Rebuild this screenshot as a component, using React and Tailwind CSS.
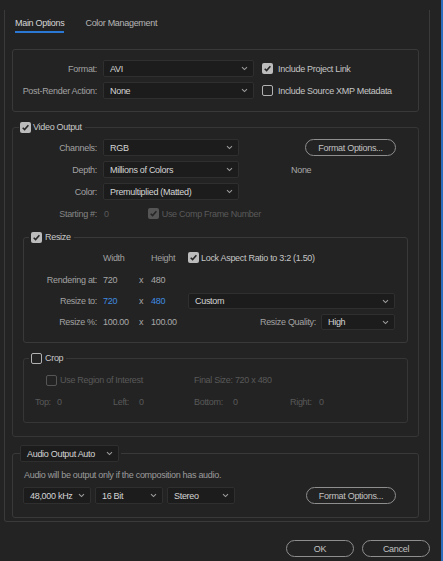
import React from "react";

// Small down-chevron used by every dropdown
function Chevron() {
  return (
    <svg width="7" height="5" viewBox="0 0 7 5" className="shrink-0">
      <path d="M1 1.2l2.5 2.4L6 1.2" fill="none" stroke="#9c9c9c" strokeWidth="1.1" />
    </svg>
  );
}

function Select({ className = "", children }) {
  return (
    <div
      className={`flex items-center justify-between bg-[#1c1c1c] border border-[#2f2f2f] rounded-[2px] pl-[6px] pr-[5px] text-[#d4d4d4] ${className}`}
    >
      <span className="whitespace-nowrap">{children}</span>
      <Chevron />
    </div>
  );
}

function Check({ on = false, dim = false }) {
  if (on) {
    return (
      <span
        className={`w-[11px] h-[11px] rounded-[2px] flex items-center justify-center shrink-0 ${
          dim ? "bg-[#555555]" : "bg-[#bcbcbc]"
        }`}
      >
        <svg width="9" height="9" viewBox="0 0 9 9">
          <path d="M1.7 4.7l1.9 1.9L7.4 2.3" fill="none" stroke="#262626" strokeWidth="1.6" />
        </svg>
      </span>
    );
  }
  return (
    <span
      className={`block w-[11px] h-[11px] rounded-[2px] border-[1.5px] shrink-0 ${
        dim ? "border-[#555555]" : "border-[#b2b2b2]"
      }`}
    />
  );
}

function Pill({ className = "", children }) {
  return (
    <div
      className={`flex items-center justify-center rounded-full border border-[#8e8e8e] text-[#c2c2c2] whitespace-nowrap ${className}`}
    >
      {children}
    </div>
  );
}

function Label({ className = "w-[84px]", children }) {
  return <span className={`text-right text-[#a2a2a2] whitespace-nowrap shrink-0 ${className}`}>{children}</span>;
}

export default function App() {
  return (
    <div className="w-[443px] h-[561px] bg-[#232323] border-r-2 border-[#2a6dbb] flex flex-col text-[9px] leading-[12px] tracking-[-0.3px] font-['Liberation_Sans',Arial,sans-serif] overflow-hidden">
      {/* main panel */}
      <div className="ml-[4px] mt-[10px] w-[426px] h-[512px] shrink-0 border-x border-b border-[#3a3a3a] rounded-b-[3px] flex flex-col">
        {/* tabs */}
        <div className="flex items-end ml-[10px] mt-[7px] gap-[21px]">
          <div className="pb-[2px] border-b-2 border-[#2b78d4] text-[#d6d6d6]">Main Options</div>
          <div className="pb-[4px] text-[#b6b6b6]">Color Management</div>
        </div>

        {/* format group */}
        <div className="ml-[7px] mt-[16px] w-[407px] h-[63px] shrink-0 border border-[#393939] rounded-[3px] pt-[10px] flex flex-col gap-[5px]">
          <div className="flex items-center h-[17px]">
            <Label>Format:</Label>
            <Select className="ml-[6px] w-[151px] h-[17px]">AVI</Select>
            <span className="ml-[8px]">
              <Check on />
            </span>
            <span className="ml-[5px] text-[#c6c6c6]">Include Project Link</span>
          </div>
          <div className="flex items-center h-[17px]">
            <Label>Post-Render Action:</Label>
            <Select className="ml-[6px] w-[151px] h-[17px]">None</Select>
            <span className="ml-[8px]">
              <Check />
            </span>
            <span className="ml-[5px] text-[#c6c6c6]">Include Source XMP Metadata</span>
          </div>
        </div>

        {/* video output */}
        <fieldset className="ml-[7px] mt-[9px] w-[407px] border border-[#363636] rounded-[3px] pb-[13px]">
          <legend className="ml-[6px] pl-[1px] pr-[3px]">
            <div className="flex items-center h-[12px] gap-[2px]">
              <Check on />
              <span className="text-[#c8c8c8]">Video Output</span>
            </div>
          </legend>

          <div className="mt-[6px] flex flex-col gap-[5px]">
            <div className="flex items-center h-[17px]">
              <Label>Channels:</Label>
              <Select className="ml-[6px] w-[136px] h-[17px]">RGB</Select>
              <Pill className="ml-[66px] w-[91px] h-[17px]">Format Options...</Pill>
            </div>
            <div className="flex items-center h-[17px]">
              <Label>Depth:</Label>
              <Select className="ml-[6px] w-[136px] h-[17px]">Millions of Colors</Select>
              <span className="ml-[52px] text-[#a8a8a8]">None</span>
            </div>
            <div className="flex items-center h-[17px]">
              <Label>Color:</Label>
              <Select className="ml-[6px] w-[136px] h-[17px]">Premultiplied (Matted)</Select>
            </div>
            <div className="flex items-center h-[17px] text-[#5a5a5a]">
              <span className="w-[84px] text-right text-[#858585]">Starting #:</span>
              <span className="ml-[7px]">0</span>
              <span className="ml-[39px]">
                <Check on dim />
              </span>
              <span className="ml-[3px]">Use Comp Frame Number</span>
            </div>
          </div>

          {/* resize */}
          <fieldset className="ml-[10px] mt-[9px] w-[385px] border border-[#393939] rounded-[3px] pb-[12px]">
            <legend className="ml-[5px] pl-[2px] pr-[3px]">
              <div className="flex items-center h-[12px] gap-[3px]">
                <Check on />
                <span className="text-[#c8c8c8]">Resize</span>
              </div>
            </legend>

            <div className="flex items-center h-[13px] mt-[8px]">
              <span className="w-[73px] shrink-0" />
              <span className="ml-[6px] w-[36px] text-[#a0a0a0]">Width</span>
              <span className="w-[12px]" />
              <span className="w-[37px] text-[#a0a0a0]">Height</span>
              <Check on />
              <span className="ml-[2px] text-[#c6c6c6]">Lock Aspect Ratio to 3:2 (1.50)</span>
            </div>

            <div className="flex items-center h-[13px] mt-[9px] text-[#a8a8a8]">
              <Label className="w-[73px]">Rendering at:</Label>
              <span className="ml-[6px] w-[36px]">720</span>
              <span className="w-[12px]">x</span>
              <span className="w-[37px]">480</span>
            </div>

            <div className="flex items-center h-[16px] mt-[7px]">
              <Label className="w-[73px]">Resize to:</Label>
              <span className="ml-[6px] w-[36px] text-[#3f8be2]">720</span>
              <span className="w-[12px] text-[#a8a8a8]">x</span>
              <span className="w-[37px] text-[#3f8be2]">480</span>
              <Select className="w-[207px] h-[16px]">Custom</Select>
            </div>

            <div className="flex items-center h-[16px] mt-[5px] text-[#a8a8a8]">
              <Label className="w-[73px]">Resize %:</Label>
              <span className="ml-[6px] w-[36px]">100.00</span>
              <span className="w-[12px]">x</span>
              <span className="w-[37px]">100.00</span>
              <Label className="w-[128px]">Resize Quality:</Label>
              <Select className="ml-[5px] w-[74px] h-[16px]">High</Select>
            </div>
          </fieldset>

          {/* crop */}
          <fieldset className="ml-[10px] mt-[9px] w-[385px] border border-[#363636] rounded-[3px] pb-[14px]">
            <legend className="ml-[5px] pl-[2px] pr-[3px]">
              <div className="flex items-center h-[12px] gap-[3px]">
                <Check />
                <span className="text-[#c8c8c8]">Crop</span>
              </div>
            </legend>

            <div className="flex items-center h-[12px] mt-[10px] text-[#595959]">
              <div className="w-[170px] flex items-center shrink-0">
                <span className="ml-[22px]">
                  <Check dim />
                </span>
                <span className="ml-[3px]">Use Region of Interest</span>
              </div>
              <span>Final Size: 720 x 480</span>
            </div>

            <div className="flex items-center h-[12px] mt-[10px] text-[#595959]">
              <span className="ml-[11px] w-[22px] shrink-0">Top:</span>
              <span className="w-[56px] shrink-0">0</span>
              <span className="w-[26px] shrink-0">Left:</span>
              <span className="w-[55px] shrink-0">0</span>
              <span className="w-[39px] shrink-0">Bottom:</span>
              <span className="w-[57px] shrink-0">0</span>
              <span className="w-[29px] shrink-0">Right:</span>
              <span>0</span>
            </div>
          </fieldset>
        </fieldset>

        {/* audio output */}
        <fieldset className="ml-[7px] mt-[8px] w-[407px] border border-[#393939] rounded-[3px] pb-[13px]">
          <legend className="ml-[7px] pr-[2px]">
            <Select className="w-[99px] h-[17px]">Audio Output Auto</Select>
          </legend>
          <div className="ml-[11px] mt-[7px] h-[12px] text-[#9c9c9c]">
            Audio will be output only if the composition has audio.
          </div>
          <div className="flex items-center h-[17px] mt-[6px]">
            <div className="ml-[10px] flex gap-[4px]">
              <Select className="w-[68px] h-[17px]">48,000 kHz</Select>
              <Select className="w-[68px] h-[17px]">16 Bit</Select>
              <Select className="w-[68px] h-[17px]">Stereo</Select>
            </div>
            <Pill className="ml-[71px] w-[90px] h-[17px]">Format Options...</Pill>
          </div>
        </fieldset>
      </div>

      {/* dialog buttons */}
      <div className="self-end mr-[11px] mt-[18px] flex gap-[8px]">
        <Pill className="w-[68px] h-[17px]">OK</Pill>
        <Pill className="w-[68px] h-[17px]">Cancel</Pill>
      </div>
    </div>
  );
}
